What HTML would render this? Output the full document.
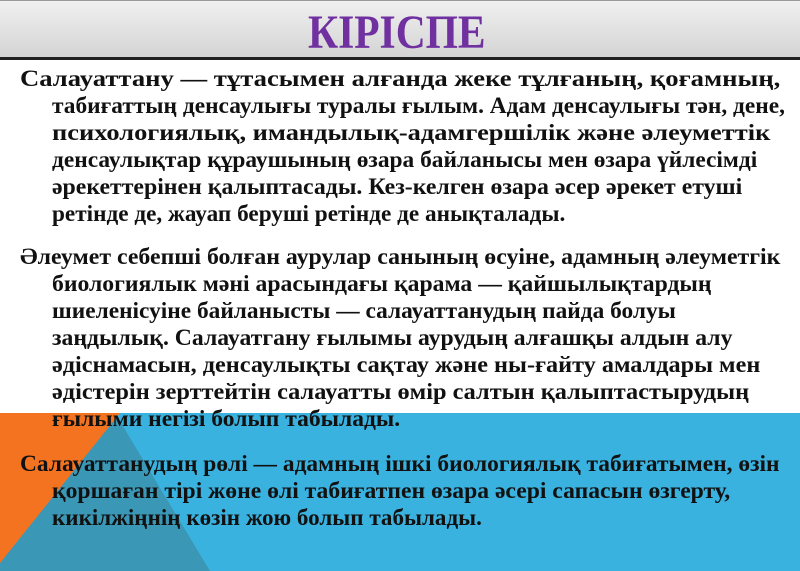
<!DOCTYPE html>
<html><head><meta charset="utf-8"><style>
body{margin:0;width:800px;height:571px;overflow:hidden;position:relative;background:#fff;font-family:"Liberation Serif","DejaVu Serif",serif;}
.bar{position:absolute;left:0;top:0;width:800px;height:56px;background:linear-gradient(#f0f0f0,#d4d4d4);border-top:1px solid #999;border-bottom:3px solid #222;}
.title{position:absolute;left:0;top:5px;font-size:48px;font-weight:bold;color:#7030a0;white-space:nowrap;transform-origin:0 0;}
.bg{position:absolute;left:0;top:0;}
.t{position:absolute;left:0;top:0;font-weight:bold;font-size:23px;color:#111;white-space:nowrap;}
.t div{position:absolute;transform-origin:0 0;}
</style></head><body>
<svg class="bg" width="800" height="571">
<rect x="0" y="413" width="800" height="158" fill="#3ab2e0"/>
<polygon points="0,413 115,413 210,571 0,571" fill="#3a98b6"/>
<polygon points="0,413 120,413 0,563" fill="#f47321"/>
</svg>
<div class="bar"></div>
<div class="title" id="ti">КІРІСПЕ</div>
<div class="t">
<div style="left:20px;top:66px">Салауаттану — тұтасымен алғанда жеке тұлғаның, қоғамның,</div>
<div style="left:52px;top:93px">табиғаттың денсаулығы туралы ғылым. Адам денсаулығы тән, дене,</div>
<div style="left:52px;top:120px">психологиялық, имандылық-адамгершілік және әлеуметтік</div>
<div style="left:52px;top:147px">денсаулықтар құраушының өзара байланысы мен өзара үйлесімді</div>
<div style="left:52px;top:174px">әрекеттерінен қалыптасады. Кез-келген өзара әсер әрекет етуші</div>
<div style="left:52px;top:201px">ретінде де, жауап беруші ретінде де анықталады.</div>
<div style="left:20px;top:244px">Әлеумет себепші болған аурулар санының өсуіне, адамның әлеуметгік</div>
<div style="left:52px;top:271px">биологиялык мәні арасындағы қарама — қайшылықтардың</div>
<div style="left:52px;top:298px">шиеленісуіне байланысты — салауаттанудың пайда болуы</div>
<div style="left:52px;top:325px">заңдылық. Салауатгану ғылымы аурудың алғашқы алдын алу</div>
<div style="left:52px;top:352px">әдіснамасын, денсаулықты сақтау және ны-ғайту амалдары мен</div>
<div style="left:52px;top:379px">әдістерін зерттейтін салауатты өмір салтын қалыптастырудың</div>
<div style="left:52px;top:406px">ғылыми негізі болып табылады.</div>
<div style="left:20px;top:451px">Салауаттанудың рөлі — адамның ішкі биологиялық табиғатымен, өзін</div>
<div style="left:52px;top:478px">қоршаған тірі жөне өлі табиғатпен өзара әсері сапасын өзгерту,</div>
<div style="left:52px;top:505px">кикілжіңнің көзін жою болып табылады.</div>
</div>
<script>
var w={66:760,93:733,120:718,147:705,174:690,201:513,244:760,271:660,298:624,325:680,352:708,379:697,406:348,451:760,478:678,505:430};
document.querySelectorAll('.t div').forEach(function(d){var t=parseInt(d.style.top);var target=w[t];if(target){var s=target/d.offsetWidth;d.style.transform='scaleX('+s+')';}});
var ti=document.getElementById('ti');var s=178/ti.offsetWidth;ti.style.transform='scaleX('+s+')';ti.style.left='308px';
</script>
</body></html>
